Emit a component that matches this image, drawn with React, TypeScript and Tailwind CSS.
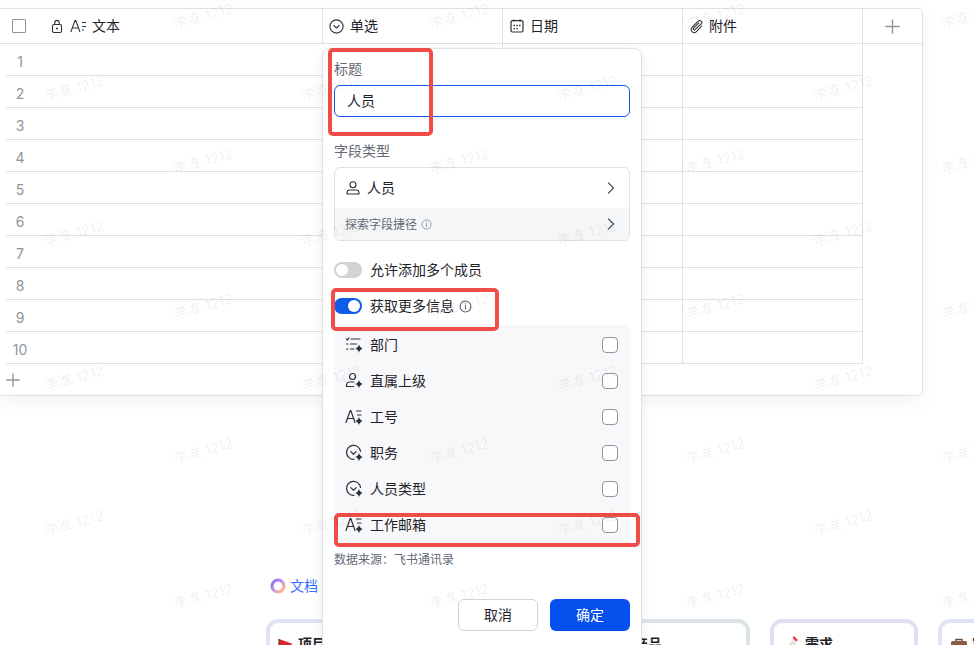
import React from "react";

const font = { fontFamily: '"Inter","Noto Sans CJK SC","Liberation Sans",sans-serif' };

const marks: [number, number][] = [];
[6, 78, 151, 223, 296, 368, 441, 513, 586].forEach((y, i) => {
  const xs = i % 2 === 0 ? [173, 429, 685, 941] : [44, 301, 557, 813];
  xs.forEach((x) => marks.push([x, y]));
});

function Spark({ x = 13.5, y = 13 }: { x?: number; y?: number }) {
  return (
    <path
      d={`M${x} ${y - 4.6}C${x + 0.8} ${y - 2} ${x + 1.8} ${y - 1} ${x + 4} ${y}C${x + 1.8} ${y + 1} ${x + 0.8} ${y + 2} ${x} ${y + 4.6}C${x - 0.8} ${y + 2} ${x - 1.8} ${y + 1} ${x - 4} ${y}C${x - 1.8} ${y - 1} ${x - 0.8} ${y - 2} ${x} ${y - 4.6}Z`}
      fill="#2b2f36"
      stroke="#f7f8fa"
      strokeWidth="0.5"
    />
  );
}

function Ico({ children, size = 18 }: { children: React.ReactNode; size?: number }) {
  return (
    <svg width={size} height={size} viewBox="0 0 18 18" fill="none" stroke="#2b2f36" strokeWidth="1.2" strokeLinecap="round" strokeLinejoin="round" className="shrink-0">
      {children}
    </svg>
  );
}

const DeptIcon = () => (
  <Ico>
    <path d="M1.5 3l1 1 1.5-2M6 3h9M1.5 8h1.5M5.5 8h6M1.5 13h1.5M5.5 13h3.5" />
    <Spark x={14} y={12.5} />
  </Ico>
);
const PersonSpark = () => (
  <Ico>
    <circle cx="7.5" cy="4.5" r="3" />
    <path d="M9 10H4.5a3 3 0 0 0-3 3v1.5h7" />
    <Spark x={14} y={12} />
  </Ico>
);
const TextSpark = () => (
  <Ico>
    <path d="M1 14.5L5.2 2.5h.6L10 14.5M2.6 10.5h5.8M11.5 3H16M12.5 7H16" />
    <Spark x={14} y={13} />
  </Ico>
);
const SelectSpark = () => (
  <Ico>
    <path d="M15.5 7.5A7 7 0 1 0 9 15.3" />
    <path d="M5.8 7.6L8.5 10.2l2.7-2.6" />
    <Spark x={14} y={13} />
  </Ico>
);

const items: [string, React.ReactNode][] = [
  ["部门", <DeptIcon />],
  ["直属上级", <PersonSpark />],
  ["工号", <TextSpark />],
  ["职务", <SelectSpark />],
  ["人员类型", <SelectSpark />],
  ["工作邮箱", <TextSpark />],
];

function Info({ c = "#646a73", s = 12 }: { c?: string; s?: number }) {
  return (
    <svg width={s} height={s} viewBox="0 0 12 12" fill="none" stroke={c} strokeWidth="1" className="shrink-0">
      <circle cx="6" cy="6" r="5" />
      <path d="M6 5.2v3.2" strokeLinecap="round" />
      <circle cx="6" cy="3.5" r="0.6" fill={c} stroke="none" />
    </svg>
  );
}

function Chevron({ c = "#4e5969" }: { c?: string }) {
  return (
    <svg width="8" height="12" viewBox="0 0 8 12" fill="none" stroke={c} strokeWidth="1.3" strokeLinecap="round" strokeLinejoin="round">
      <path d="M1.5 1l5 5-5 5" />
    </svg>
  );
}

function Plus({ s = 14 }: { s?: number }) {
  return (
    <svg width={s} height={s} viewBox="0 0 14 14" stroke="#8f959e" strokeWidth="1.3" strokeLinecap="round">
      <path d="M7 .8v12.4M.8 7h12.4" />
    </svg>
  );
}

function Card({ title, tint, icon }: { title: string; tint: string; icon: React.ReactNode }) {
  return (
    <div className={`w-[148px] h-[80px] shrink-0 rounded-xl border-4 bg-white flex items-start gap-[4px] pl-2 pt-[11px] ${tint}`}>
      {icon}
      <span className="text-sm font-semibold text-[#1f2329] leading-5">{title}</span>
    </div>
  );
}

export default function App() {
  return (
    <div style={font} className="relative h-[645px] w-[974px] overflow-hidden bg-white text-sm text-[#1f2329]">
      {/* table */}
      <div className="ml-[-1px] mt-2 w-[924px] h-[388px] rounded-r-md border border-[#dee0e3] bg-white shadow-[0_6px_20px_rgba(0,0,0,0.05)] overflow-hidden">
        <div className="flex h-[35px] border-b border-[#dee0e3]">
          <div className="w-[323px] flex items-center border-r border-[#dee0e3]">
            <span className="ml-3 mr-[25px] size-[14px] rounded-[1px] border border-[#8f959e]" />
            <svg width="12" height="15" viewBox="0 0 12 15" fill="none" stroke="#2b2f36" strokeWidth="1.1" className="mr-[7px]">
              <rect x="1.5" y="5.5" width="9" height="8" rx="1.5" />
              <path d="M3.8 5.5V3.6a2.2 2.2 0 0 1 4.4 0v1.9" />
              <circle cx="6" cy="9.5" r="1" fill="#2b2f36" stroke="none" />
            </svg>
            <svg width="17" height="14" viewBox="0 0 17 14" fill="none" stroke="#2b2f36" strokeWidth="1.05" className="mr-[5px]">
              <path d="M.8 13L5 1.5h.8L10 13M2.4 9h6M12 3.5h4M12 7.5h4M12 11h2" />
            </svg>
            <span>文本</span>
          </div>
          <div className="w-[180px] flex items-center border-r border-[#dee0e3] pl-[6px] gap-[6px]">
            <svg width="15" height="15" viewBox="0 0 15 15" fill="none" stroke="#2b2f36" strokeWidth="1.1" strokeLinecap="round" strokeLinejoin="round">
              <circle cx="7.5" cy="7.5" r="6.6" />
              <path d="M4.8 6.4l2.7 2.6 2.7-2.6" />
            </svg>
            <span>单选</span>
          </div>
          <div className="w-[180px] flex items-center border-r border-[#dee0e3] pl-[7px] gap-[6px]">
            <svg width="14" height="14" viewBox="0 0 14 14" fill="none" stroke="#2b2f36" strokeWidth="1.2">
              <rect x="1" y="1.6" width="12" height="11.4" rx="1.5" />
              <path d="M4 .6v2M10 .6v2" />
              <path d="M3.5 6.5h1.5M6.3 6.5h1.5M9 6.5h1.5M3.5 9.6h1.5M6.3 9.6h1.5" strokeWidth="1.4" />
            </svg>
            <span>日期</span>
          </div>
          <div className="w-[180px] flex items-center border-r border-[#dee0e3] pl-[6px] gap-[5px]">
            <svg width="15" height="15" viewBox="0 0 15 15" fill="none" stroke="#2b2f36" strokeWidth="1.05" strokeLinecap="round">
              <path d="M12.8 7l-5.4 5.6a3 3 0 0 1-4.4-4.2l6.2-6.2a2 2 0 0 1 3 2.8L6.1 10.6a1 1 0 0 1-1.5-1.4l5.3-5.4" />
            </svg>
            <span>附件</span>
          </div>
          <div className="flex-1 flex items-center justify-center">
            <Plus s={15} />
          </div>
        </div>
        {Array.from({ length: 10 }, (_, i) => (
          <div key={i} className="flex h-8 ml-[6px] w-[857px] border-b border-[#dee0e3]">
            <div className="w-[317px] flex items-center pt-[5px]">
              <span className="w-[28px] text-center text-[#8f959e]">{i + 1}</span>
            </div>
            <div className="w-[180px] border-r border-[#dee0e3]" />
            <div className="w-[180px] border-r border-[#dee0e3]" />
            <div className="w-[180px] border-r border-[#dee0e3]" />
          </div>
        ))}
        <div className="h-8 flex items-center pl-[6px]">
          <Plus s={14} />
        </div>
      </div>

      {/* lower page */}
      <div className="mt-[180px] ml-[270px] flex items-center gap-1 h-5">
        <svg width="16" height="16" viewBox="0 0 16 16" fill="none">
          <defs>
            <linearGradient id="ring" x1="0" y1="0" x2="1" y2="1">
              <stop offset="0.25" stopColor="#9d7bf2" />
              <stop offset="0.55" stopColor="#d99ad8" />
              <stop offset="0.85" stopColor="#fdb58c" />
            </linearGradient>
          </defs>
          <circle cx="8" cy="8" r="6" stroke="url(#ring)" strokeWidth="3.2" />
        </svg>
        <span className="text-[#3370ff]">文档</span>
      </div>
      <div className="mt-[23px] ml-[266px] flex gap-5">
        <Card
          title="项目"
          tint="border-[#dfe3f3]"
          icon={
            <svg width="16" height="16" viewBox="0 0 16 16" className="mt-1 shrink-0">
              <path d="M1 1l14 5-14 5z" fill="#d3262e" />
              <path d="M1 1v14" stroke="#7a2a2a" strokeWidth="1.2" />
            </svg>
          }
        />
        <Card title="任务" tint="border-[#dfe3f3]" icon={<span className="size-4" />} />
        <Card title="产品" tint="border-[#dbe4e7]" icon={<span className="size-4" />} />
        <Card
          title="需求"
          tint="border-[#dfe1f3]"
          icon={
            <svg width="19" height="18" viewBox="0 0 19 18" className="mt-[-1px] shrink-0">
              <path d="M2 17L11 6.5l4 3L7 18z" fill="#e8e3da" />
              <path d="M12 3l4 4-2 1.5L10.500 5z" fill="#ee3a4a" />
            </svg>
          }
        />
        <Card
          title="客户"
          tint="border-[#dfe3f3]"
          icon={
            <svg width="18" height="16" viewBox="0 0 18 16" className="mt-1 shrink-0">
              <path d="M6 3V1.500h6V3" fill="none" stroke="#6d4a35" strokeWidth="1.4" />
              <rect x="1" y="3" width="16" height="12" rx="1.500" fill="#8a5d42" />
            </svg>
          }
        />
      </div>

      {/* field dialog */}
      <div className="absolute left-[322px] top-12 w-[320px] h-[620px] rounded-lg border border-[#dee0e3] bg-white px-[11px] pt-[11px] shadow-[0_4px_12px_rgba(0,0,0,0.08)]">
        <div className="h-[18px] leading-[18px] text-[#646a73]">标题</div>
        <div className="mt-[7px] h-8 rounded-md border border-[#1456f0] flex items-center pl-3">人员</div>
        <div className="mt-[25px] h-[18px] leading-[18px] text-[#646a73]">字段类型</div>
        <div className="mt-[7px] h-[74px] rounded-md border border-[#dee0e3] overflow-hidden">
          <div className="h-10 flex items-center pl-[10px] pr-[14px]">
            <svg width="16" height="16" viewBox="0 0 16 16" fill="none" stroke="#2b2f36" strokeWidth="1.1" className="mr-[6px]">
              <circle cx="8" cy="4.8" r="3" />
              <path d="M2 14v-1.2A2.8 2.8 0 0 1 4.800 10h6.400a2.800 2.800 0 0 1 2.800 2.800V14z" />
            </svg>
            <span>人员</span>
            <span className="ml-auto flex"><Chevron /></span>
          </div>
          <div className="h-8 bg-[#f5f6f7] flex items-center pl-[10px] pr-[14px] gap-[4px]">
            <span className="text-xs text-[#646a73] pt-[2px]">探索字段捷径</span>
            <Info c="#8f959e" s={11} />
            <span className="ml-auto flex"><Chevron /></span>
          </div>
        </div>
        <div className="mt-[21px] flex items-center h-4 gap-2">
          <span className="w-7 h-4 rounded-full bg-[#d0d3d6] flex items-center pl-[2px]">
            <span className="size-3 rounded-full bg-white" />
          </span>
          <span>允许添加多个成员</span>
        </div>
        <div className="mt-[20px] flex items-center h-4 gap-2">
          <span className="w-7 h-4 rounded-full bg-[#0f5ce8] flex items-center justify-end pr-[2px]">
            <span className="size-3 rounded-full bg-white" />
          </span>
          <span>获取更多信息</span>
          <span className="ml-[-3px] flex"><Info s={13} /></span>
        </div>
        <div className="mt-[11px] rounded-md bg-[#f7f8fa] w-[296px] h-[219px] pt-[2px]">
          {items.map(([label, icon]) => (
            <div key={label} className="h-9 flex items-center pl-[11px] pr-3 gap-[7px]">
              {icon}
              <span>{label}</span>
              <span className="ml-auto size-4 rounded-[4px] border border-[#8f959e] bg-white" />
            </div>
          ))}
        </div>
        <div className="mt-[7px] text-xs leading-[18px] text-[#646a73]">数据来源：飞书通讯录</div>
        <div className="mt-[30px] flex justify-end gap-3">
          <button className="w-20 h-8 rounded-md border border-[#d0d3d6] bg-white">取消</button>
          <button className="w-20 h-8 rounded-md bg-[#0550ec] text-white">确定</button>
        </div>
      </div>

      {/* annotations */}
      <div className="absolute left-[328px] top-12 w-[105px] h-[88px] rounded-[5px] border-4 border-[#f04c48]" />
      <div className="absolute left-[331px] top-[288px] w-[168px] h-[43px] rounded-[5px] border-4 border-[#f04c48]" />
      <div className="absolute left-[334px] top-[513px] w-[306px] h-[34px] rounded-[5px] border-4 border-[#f04c48]" />

      {/* watermark */}
      {marks.map(([x, y]) => (
        <span
          key={`${x}-${y}`}
          style={{ left: x, top: y }}
          className="absolute whitespace-nowrap -rotate-[15deg] text-sm leading-5 text-black/[0.07] pointer-events-none"
        >
          李准 1212
        </span>
      ))}
    </div>
  );
}
